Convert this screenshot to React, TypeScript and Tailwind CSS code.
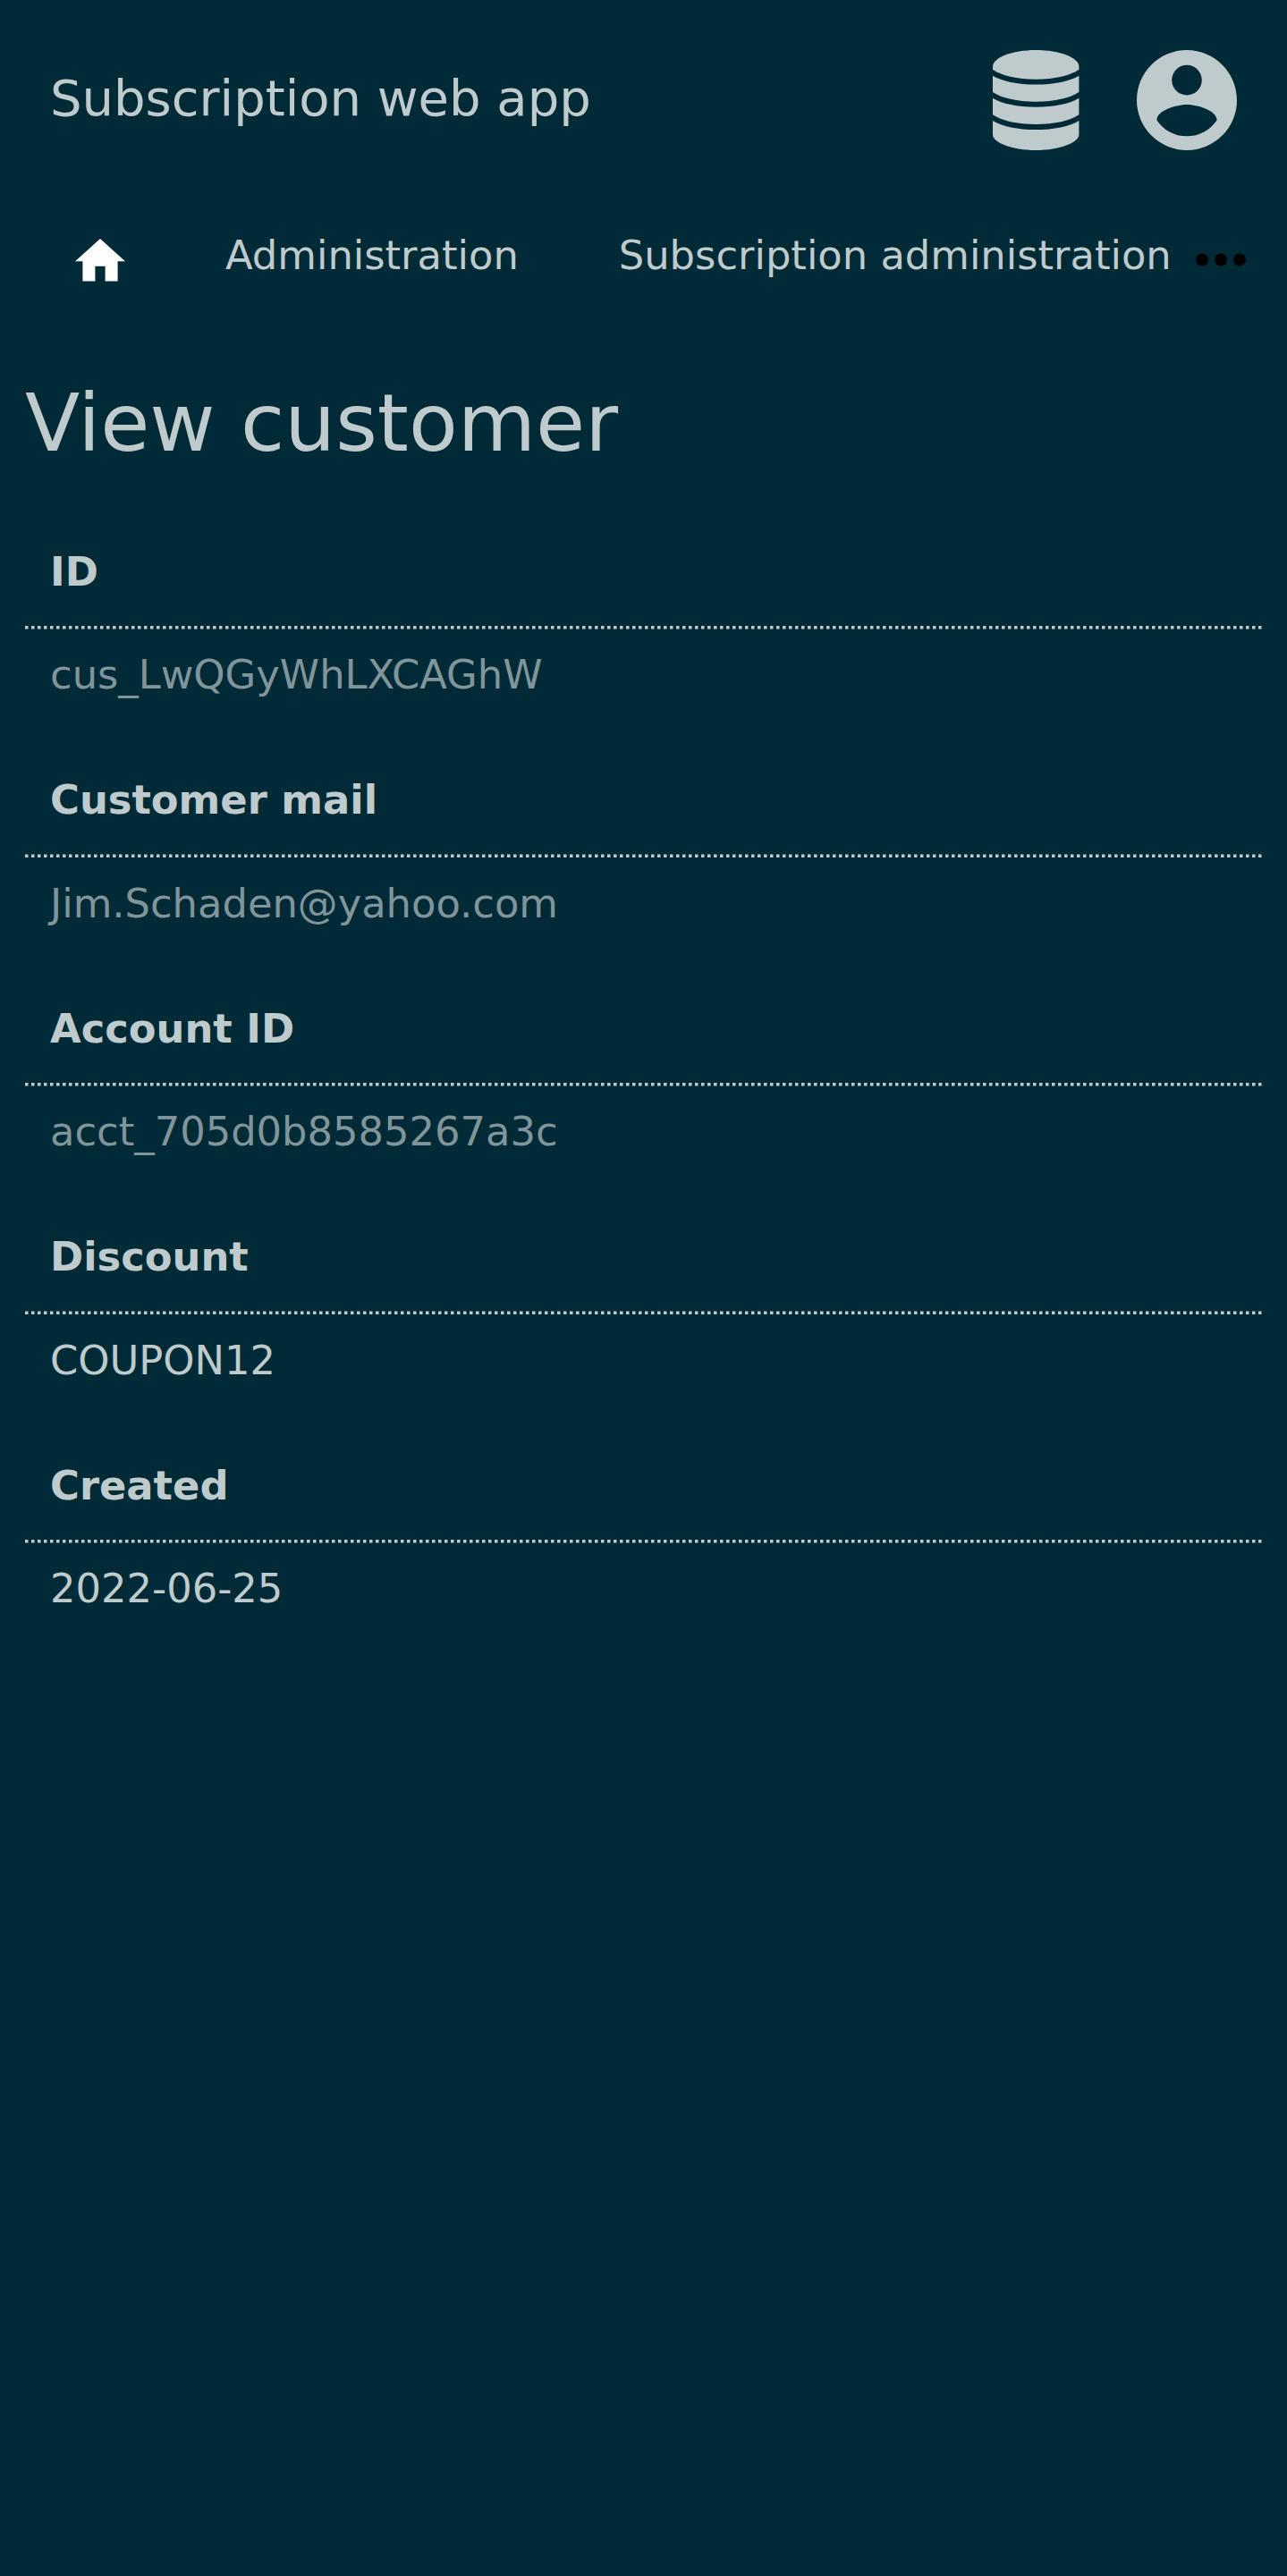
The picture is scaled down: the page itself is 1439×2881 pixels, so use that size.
const fields = [
  { label: "ID", value: "cus_LwQGyWhLXCAGhW", dim: true },
  { label: "Customer mail", value: "Jim.Schaden@yahoo.com", dim: true },
  { label: "Account ID", value: "acct_705d0b8585267a3c", dim: true },
  { label: "Discount", value: "COUPON12", dim: false },
  { label: "Created", value: "2022-06-25", dim: false },
];

function DatabaseIcon() {
  return (
    <svg viewBox="0 0 96.4 112" className="h-[112px] w-[96.4px] fill-current">
      <path d="M48.200 0C75 0 96.400 8.500 96.400 18.500V21.700C87 28.500 69 32.700 48.200 32.700S9.400 28.500 0 21.700V18.500C0 8.500 21.400 0 48.200 0Z" />
      <path d="M0 28.700C10 34.800 28 38.500 48.200 38.500S86.400 34.800 96.400 28.700V47C87 53.600 69 57.800 48.200 57.800S9.400 53.600 0 47Z" />
      <path d="M0 53.700C10 60 28 63.700 48.200 63.700S86.400 60 96.400 53.700V72.200C87 78.800 69 83 48.200 83S9.400 78.800 0 72.200Z" />
      <path d="M0 78.900C10 85.200 28 89 48.200 89S86.400 85.200 96.400 78.900V94.500C96.400 103.500 75 112 48.200 112S0 103.500 0 94.500Z" />
    </svg>
  );
}

function AccountIcon() {
  return (
    <svg viewBox="2 2 20 20" className="size-[112px] fill-current">
      <path d="M12 19.200C9.500 19.200 7.290 17.920 6 16C6.030 14 10 12.900 12 12.900S17.970 14 18 16C16.710 17.920 14.500 19.200 12 19.200M12 5A3 3 0 0 1 15 8A3 3 0 0 1 12 11A3 3 0 0 1 9 8A3 3 0 0 1 12 5M12 2A10 10 0 0 0 2 12A10 10 0 0 0 12 22A10 10 0 0 0 22 12C22 6.470 17.500 2 12 2Z" />
    </svg>
  );
}

// Dotted separator, 3.5px thick; the half-covered row sits above or below the full ones.
function DottedLine({ softEdgeOnTop }: { softEdgeOnTop: boolean }) {
  return (
    <div className={softEdgeOnTop ? "flex flex-col-reverse" : "flex flex-col"}>
      <div className="h-[3px] bg-[repeating-linear-gradient(90deg,#bfcacd_0_3px,#607b82_3px_4px,transparent_4px_7px)]" />
      <div className="h-px bg-[repeating-linear-gradient(90deg,#bfcacd_0_3px,#607b82_3px_4px,transparent_4px_7px)] opacity-50" />
    </div>
  );
}

export default function App() {
  return (
    <div className="min-h-[2881px] w-full overflow-hidden bg-[#002b36] font-['DejaVu_Sans',sans-serif] text-[44.8px] leading-[53px] text-[#bfcacd]">
      <header className="flex h-[224px] items-start justify-between px-[56px]">
        <span className="mt-[77px] text-[56px] leading-[65px] whitespace-nowrap">Subscription web app</span>
        <div className="mt-[56px] flex items-center gap-[64.3px]">
          <DatabaseIcon />
          <AccountIcon />
        </div>
      </header>
      <nav className="flex h-[112px] items-start whitespace-nowrap">
        <svg viewBox="2 3 20 17" className="mt-[43px] ml-[84px] h-[47.6px] w-[56px] shrink-0 fill-white">
          <path d="M10 20v-6h4v6h5v-8h3L12 3 2 12h3v8z" />
        </svg>
        <span className="mt-[35px] ml-[112px]">Administration</span>
        <span className="mt-[35px] ml-[112px]">Subscription administration</span>
        <svg viewBox="0 0 56 16" className="mt-[59px] ml-[27px] h-[16px] w-[56px] shrink-0 fill-black">
          <circle cx="7" cy="7.5" r="7" />
          <circle cx="28" cy="7.5" r="7" />
          <circle cx="49" cy="7.5" r="7" />
        </svg>
      </nav>
      <main className="px-[28px]">
        <h1 className="pt-[85px] text-[89.6px] leading-[104px]">View customer</h1>
        <dl className="mt-[75px]">
          {fields.map((f, i) => (
            <div key={f.label} className="h-[255.5px]">
              <dt className={i % 2 ? "h-[99.5px] px-[28px] pt-[12.6px] font-bold" : "h-[100px] px-[28px] pt-[12.6px] font-bold"}>
                {f.label}
              </dt>
              <DottedLine softEdgeOnTop={i % 2 === 1} />
              <dd
                className={
                  (f.dim ? "text-[#80959b] " : "") + (i % 2 ? "px-[28px] pt-[25px]" : "px-[28px] pt-[23.8px]")
                }
              >
                {f.value}
              </dd>
            </div>
          ))}
        </dl>
      </main>
    </div>
  );
}
